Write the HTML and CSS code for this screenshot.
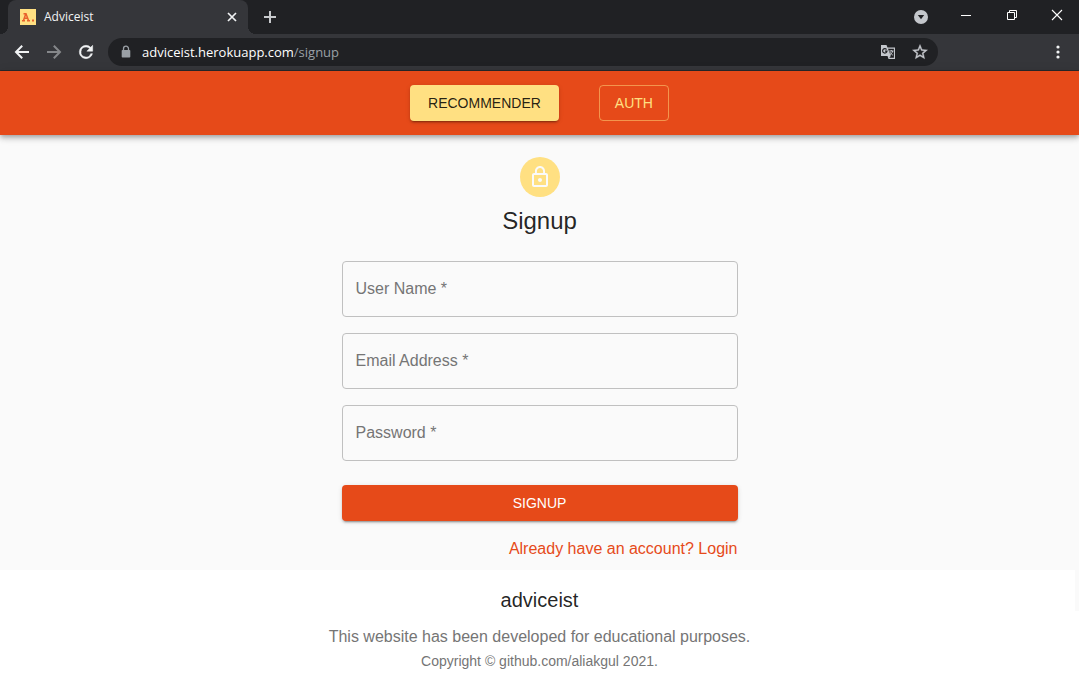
FILE: index.html
```html
<!DOCTYPE html>
<html lang="en">
<head>
<meta charset="utf-8">
<meta name="viewport" content="width=device-width, initial-scale=1">
<title>Adviceist</title>
<link rel="stylesheet" href="styles.css">
</head>
<body>
<div class="browser">
  <div class="tab-strip">
    <div class="tab">
      <svg class="favicon" width="16" height="16" viewBox="0 0 16 16" fill="none" aria-hidden="true">
        <path fill="#ffe082" d="M0 0h16v16H0z"/>
        <path stroke="#e8622c" stroke-width="1.500" d="M3.500 4.700H6l2.600 7M5.800 4.700 3.400 11.700M4.200 9.300h3.600M2 11.700h3M7 11.700h3"/>
        <path fill="#e8622c" d="M12 10.500h2v2h-2z"/>
      </svg>
      <span class="tab-title">Adviceist</span>
      <button class="icon-button tab-close" type="button" aria-label="Close tab">
        <svg width="16" height="16" viewBox="0 0 16 16" fill="none" stroke="#f1f3f4" stroke-width="1.7"><path d="m4 4 8 8M12 4l-8 8"/></svg>
      </button>
    </div>
    <button class="icon-button new-tab" type="button" aria-label="New tab">
      <svg width="16" height="16" viewBox="0 0 16 16" fill="none" stroke="#c8cacd" stroke-width="2"><path d="M8 2v12M2 8h12"/></svg>
    </button>
    <div class="window-controls">
      <button class="icon-button tab-search" type="button" aria-label="Search tabs">
        <svg width="16" height="16" viewBox="0 0 16 16"><circle cx="8" cy="8" r="7" fill="#c4c7cc"/><path fill="#202124" d="M4.800 6h6.400L8 10.200z"/></svg>
      </button>
      <button class="icon-button window-button" type="button" aria-label="Minimize">
        <svg width="12" height="12" viewBox="0 0 12 12" fill="none" stroke="#fff"><path d="M1 6.500h10"/></svg>
      </button>
      <button class="icon-button window-button" type="button" aria-label="Restore">
        <svg width="12" height="12" viewBox="0 0 12 12" fill="none" stroke="#fff"><path d="M1.500 3.500h7v7h-7zM3.500 3.500v-2h7v7h-2"/></svg>
      </button>
      <button class="icon-button window-button" type="button" aria-label="Close">
        <svg width="12" height="12" viewBox="0 0 12 12" fill="none" stroke="#fff" stroke-width="1.100"><path d="m1 1 10 10M11 1 1 11"/></svg>
      </button>
    </div>
  </div>
  <div class="toolbar">
    <button class="icon-button" type="button" aria-label="Back">
      <svg width="20" height="20" viewBox="0 0 20 20" fill="none" stroke="#f1f3f4" stroke-width="2"><path d="M17 10H4.500M10.200 3.700 4 10l6.200 6.300"/></svg>
    </button>
    <button class="icon-button" type="button" aria-label="Forward">
      <svg width="20" height="20" viewBox="0 0 20 20" fill="none" stroke="#85878a" stroke-width="2"><path d="M3 10h12.500M9.800 3.700 16 10l-6.200 6.300"/></svg>
    </button>
    <button class="icon-button" type="button" aria-label="Reload">
      <svg width="20" height="20" viewBox="0 0 24 24" fill="#f1f3f4"><path stroke="#f1f3f4" stroke-width=".6" d="M17.650 6.350A7.960 7.960 0 0 0 12 4a8 8 0 1 0 7.730 10h-2.080A6 6 0 1 1 12 6c1.660 0 3.140.69 4.220 1.780L13 11h7V4z"/></svg>
    </button>
    <div class="address-bar">
      <svg class="site-lock" width="16" height="16" viewBox="0 0 16 16" aria-hidden="true"><path fill="#9aa0a6" d="M4.500 6h7a.8.8 0 0 1 .8.800v5.900a.8.800 0 0 1-.8.800h-7a.8.800 0 0 1-.8-.8V6.800a.8.800 0 0 1 .8-.8z"/><path fill="none" stroke="#9aa0a6" stroke-width="1.300" d="M5.500 6.500V4.700a2.500 2.500 0 0 1 5 0v1.800"/></svg>
      <div class="address" role="textbox" aria-label="Address" contenteditable="true" spellcheck="false">adviceist.herokuapp.com<span class="address-path">/signup</span></div>
      <button class="icon-button" type="button" aria-label="Translate this page">
        <svg width="16" height="16" viewBox="0 0 16 16" fill="none"><path fill="#c4c7cc" d="M1 1h5.500l1 2.500h7.500v11.500H8.500L7.500 12H1z"/><path fill="#202124" d="M8 4.700h5.900v9.100H9.300l1.500-1.800z"/><path stroke="#202124" stroke-width="1.200" d="M6.600 5.500A2.200 2.200 0 1 0 7 7.200H5"/><path stroke="#c4c7cc" d="M9.200 7h4.300M11.300 6v1M12.700 7c-.4 1.800-1.500 3-2.700 3.800M10 8.200c.7 1.400 1.700 2.300 2.900 3"/></svg>
      </button>
      <button class="icon-button" type="button" aria-label="Bookmark this tab">
        <svg width="18" height="18" viewBox="0 0 24 24" fill="#c4c7cc" stroke="#c4c7cc" stroke-width=".5"><path d="m22 9.240-7.190-.62L12 2 9.190 8.630 2 9.240l5.460 4.730L5.820 21 12 17.270 18.180 21l-1.630-7.030zM12 15.400l-3.760 2.270 1-4.280-3.320-2.880 4.380-.38L12 6.100l1.710 4.040 4.380.38-3.320 2.880 1 4.280z"/></svg>
      </button>
    </div>
    <button class="icon-button browser-menu" type="button" aria-label="Menu">
      <svg width="16" height="16" viewBox="0 0 16 16" fill="#f1f3f4"><circle cx="8" cy="3" r="1.600"/><circle cx="8" cy="8" r="1.600"/><circle cx="8" cy="13" r="1.600"/></svg>
    </button>
  </div>
</div>
<header class="app-bar">
  <nav class="nav">
    <button class="button button-accent" type="button">RECOMMENDER</button>
    <button class="button button-outlined" type="button">AUTH</button>
  </nav>
</header>
<main class="main">
  <div class="signup">
    <div class="avatar">
      <svg width="24" height="24" viewBox="0 0 24 24" fill="#fafafa" aria-hidden="true"><path d="M12 17c1.100 0 2-.9 2-2s-.9-2-2-2-2 .9-2 2 .9 2 2 2zm6-9h-1V6c0-2.760-2.240-5-5-5S7 3.240 7 6v2H6c-1.100 0-2 .9-2 2v10c0 1.100.9 2 2 2h12c1.100 0 2-.9 2-2V10c0-1.100-.9-2-2-2zM8.900 6c0-1.710 1.390-3.100 3.100-3.100s3.100 1.390 3.100 3.100v2H8.900V6zM18 20H6V10h12v10z"/></svg>
    </div>
    <h1 class="title">Signup</h1>
    <form class="form">
      <div class="field">
        <input class="field-input" id="username" type="text" placeholder=" " required>
        <label class="field-label" for="username">User Name *</label>
      </div>
      <div class="field">
        <input class="field-input" id="email" type="email" placeholder=" " required>
        <label class="field-label" for="email">Email Address *</label>
      </div>
      <div class="field">
        <input class="field-input" id="password" type="password" placeholder=" " required>
        <label class="field-label" for="password">Password *</label>
      </div>
      <button class="button button-primary" type="submit">SIGNUP</button>
      <a class="login-link" href="#login">Already have an account? Login</a>
    </form>
  </div>
</main>
<footer class="footer">
  <h2 class="footer-title">adviceist</h2>
  <p class="footer-text">This website has been developed for educational purposes.</p>
  <p class="footer-copy">Copyright © github.com/aliakgul 2021.</p>
</footer>
</body>
</html>
```

FILE: styles.css
```css
* { box-sizing: border-box; }

body {
  margin: 0;
  min-height: 100vh;
  display: flex;
  flex-direction: column;
  background: #fafafa;
  color: rgba(0, 0, 0, .87);
  font: 16px/24px "Liberation Sans", Arial, sans-serif;
}

h1, h2, p { margin: 0; font-weight: 400; }

/* Browser window */
.browser {
  background: #35363a;
  border-bottom: 1px solid #28292c;
  font-family: "Open Sans", "Noto Sans", sans-serif;
}

.icon-button {
  display: grid;
  place-items: center;
  flex: none;
  width: 32px;
  height: 28px;
  padding: 0;
  border: 0;
  background: none;
}

.tab-strip {
  display: flex;
  align-items: center;
  height: 34px;
  padding-left: 8px;
  background: #202124;
}

.tab {
  position: relative;
  display: flex;
  align-items: center;
  gap: 8px;
  width: 240px;
  height: 34px;
  padding: 0 8px 0 12px;
  border-radius: 8px 8px 0 0;
  background: #35363a;
  color: #f1f3f4;
  font-size: 12px;
}

.tab::before, .tab::after {
  content: "";
  position: absolute;
  bottom: 0;
  width: 8px;
  height: 8px;
}

.tab::before { right: 100%; background: radial-gradient(circle at 0 0, #202124 8px, #35363a 8px); }
.tab::after { left: 100%; background: radial-gradient(circle at 100% 0, #202124 8px, #35363a 8px); }

.tab-title { flex: 1; }
.tab-close { width: 16px; height: 16px; }
.new-tab { margin-left: 6px; }

.window-controls {
  display: flex;
  align-items: center;
  margin-left: auto;
}

.tab-search { margin-right: 6px; }
.window-button { width: 46px; height: 24px; align-self: flex-start; }
.window-button:last-child { width: 44px; }

.toolbar {
  display: flex;
  align-items: center;
  height: 36px;
  padding: 0 5px 0 6px;
}

.address-bar {
  display: flex;
  align-items: center;
  flex: 1;
  height: 28px;
  margin-left: 6px;
  padding: 0 2px 0 10px;
  border-radius: 14px;
  background: #202124;
}

.site-lock { flex: none; }

.address {
  flex: 1;
  margin-left: 8px;
  color: #fff;
  font-size: 13px;
  line-height: 24px;
  white-space: nowrap;
  outline: none;
}

.address-path { color: #9aa0a6; }
.browser-menu { margin-left: 104px; }

/* Application */
.app-bar {
  z-index: 1;
  padding: 14px 24px;
  background: #e64a19;
  box-shadow: 0 2px 4px -1px rgba(0, 0, 0, .2), 0 4px 5px rgba(0, 0, 0, .14), 0 1px 10px rgba(0, 0, 0, .12);
}

.nav {
  display: flex;
  justify-content: center;
  gap: 40px;
}

.button {
  height: 36px;
  border: 0;
  border-radius: 4px;
  font: 14px/24px "Liberation Sans", Arial, sans-serif;
  cursor: pointer;
}

.button-accent, .button-primary {
  padding: 0 18px;
  box-shadow: 0 3px 1px -2px rgba(0, 0, 0, .2), 0 2px 2px rgba(0, 0, 0, .14), 0 1px 5px rgba(0, 0, 0, .12);
}

.button-accent { background: #ffe082; color: rgba(0, 0, 0, .87); }
.button-primary { margin-top: 8px; background: #e64a19; color: #fff; }

.button-outlined {
  padding: 0 15px;
  border: 1px solid rgba(255, 224, 130, .5);
  background: none;
  color: #ffe082;
}

.main {
  display: flex;
  justify-content: center;
  padding: 22px 24px 9px;
}

.signup {
  display: flex;
  flex-direction: column;
  align-items: center;
  width: 100%;
  max-width: 396px;
}

.avatar {
  display: grid;
  place-items: center;
  width: 40px;
  height: 40px;
  border-radius: 50%;
  background: #ffe082;
}

.title {
  margin-top: 8px;
  font-size: 24px;
  line-height: 32px;
}

.form {
  display: flex;
  flex-direction: column;
  gap: 16px;
  width: 100%;
  margin-top: 24px;
}

.field { display: grid; align-items: center; }

.field-input, .field-label { grid-area: 1 / 1; }

.field-input {
  width: 100%;
  height: 56px;
  padding: 0 14px;
  border: 1px solid #c0c0c0;
  border-radius: 4px;
  background: transparent;
  color: inherit;
  font: inherit;
}

.field-label {
  padding: 0 14px;
  color: #757575;
  pointer-events: none;
}

.field-input:focus + .field-label,
.field-input:not(:placeholder-shown) + .field-label { visibility: hidden; }

.login-link {
  align-self: flex-end;
  color: #e64a19;
  text-decoration: none;
}

.footer {
  position: relative;
  flex: 1;
  padding: 14px 24px 12px;
  background: #fff;
  text-align: center;
}

/* Page background showing beside the footer's upper edge */
.footer::after {
  content: "";
  position: absolute;
  top: 0;
  right: 0;
  width: 4px;
  height: 41px;
  background: #fafafa;
}

.footer-title { font-size: 20px; line-height: 32px; }
.footer-text { margin-top: 9px; color: #757575; }
.footer-copy { margin-top: 2px; color: #757575; font-size: 14px; line-height: 20px; }
```
